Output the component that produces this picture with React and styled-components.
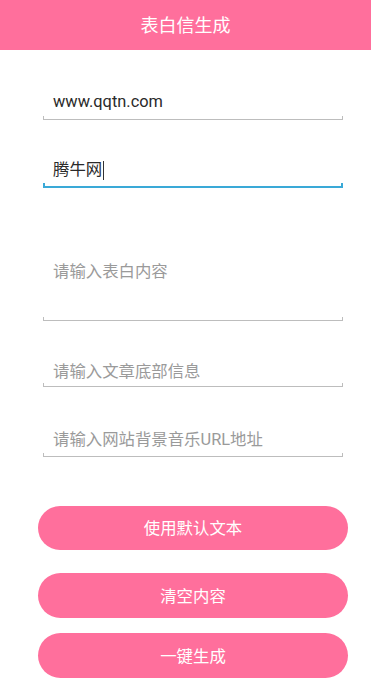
import React from "react";
import styled, { createGlobalStyle } from "styled-components";

const PINK = "#ff6f9c";

const Global = createGlobalStyle`
  html, body { margin: 0; padding: 0; background: #fff; }
  body { font-family: Roboto, "Noto Sans CJK SC", sans-serif; }
  * { box-sizing: border-box; }
`;

const Page = styled.div`
  width: 371px;
  min-height: 688px;
  background: #fff;
  display: flex;
  flex-direction: column;
`;

const Header = styled.header`
  height: 50px;
  background: ${PINK};
  color: #fff;
  font-size: 18px;
  display: flex;
  align-items: center;
  justify-content: center;
  padding-bottom: 3px;
`;

const Form = styled.div`
  display: flex;
  flex-direction: column;
  padding-left: 43px;
  width: 343px;
`;

const Field = styled.div`
  margin-top: ${(p) => p.$top}px;
  display: flex;
  flex-direction: column;
`;

const Value = styled.div`
  height: 20px;
  line-height: 20px;
  padding-left: 10px;
  font-size: 16.4px;
  color: ${(p) => (p.$placeholder ? "#9a9a9a" : "#2a2a2a")};
  display: flex;
  align-items: center;
  white-space: nowrap;
`;

const Caret = styled.span`
  display: inline-block;
  width: 1px;
  height: 19px;
  background: #333;
  margin-left: 1px;
`;

const Underline = styled.div`
  margin-top: ${(p) => p.$gap}px;
  height: ${(p) => (p.$focused ? 5 : 4)}px;
  border: 0 solid ${(p) => (p.$focused ? "#3aa9d7" : "#bdbdbd")};
  border-bottom-width: ${(p) => (p.$focused ? 2 : 1)}px;
  border-left-width: ${(p) => (p.$focused ? 2 : 1)}px;
  border-right-width: ${(p) => (p.$focused ? 2 : 1)}px;
`;

const Buttons = styled.div`
  display: flex;
  flex-direction: column;
  padding-left: 38px;
  width: 348px;
`;

const Button = styled.button`
  margin-top: ${(p) => p.$top}px;
  height: ${(p) => p.$h}px;
  border: none;
  border-radius: 23px;
  background: ${PINK};
  color: #fff;
  font-family: Roboto, "Noto Sans CJK SC", sans-serif;
  font-size: 16.4px;
  padding: 0 0 2px;
`;

const fields = [
  { top: 42, text: "www.qqtn.com", gap: 4 },
  { top: 40, text: "腾牛网", gap: 3, focused: true, caret: true },
  { top: 74, text: "请输入表白内容", gap: 35, placeholder: true },
  { top: 41, text: "请输入文章底部信息", gap: 1, placeholder: true },
  { top: 43, text: "请输入网站背景音乐URL地址", gap: 3, placeholder: true },
];

const buttons = [
  { top: 49, h: 44, label: "使用默认文本" },
  { top: 23, h: 45, label: "清空内容" },
  { top: 15, h: 45, label: "一键生成" },
];

export default function App() {
  return (
    <Page>
      <Global />
      <Header>表白信生成</Header>
      <Form>
        {fields.map((f, i) => (
          <Field key={i} $top={f.top}>
            <Value $placeholder={f.placeholder}>
              {f.text}
              {f.caret && <Caret />}
            </Value>
            <Underline $gap={f.gap} $focused={f.focused} />
          </Field>
        ))}
      </Form>
      <Buttons>
        {buttons.map((b, i) => (
          <Button key={i} $top={b.top} $h={b.h}>
            {b.label}
          </Button>
        ))}
      </Buttons>
    </Page>
  );
}
